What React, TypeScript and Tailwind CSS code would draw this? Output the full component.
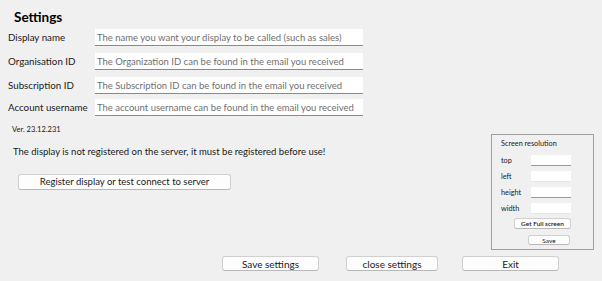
import React from 'react';

const font = { fontFamily: 'Lato, "Open Sans", sans-serif' };

const fields = [
    { label: 'Display name', placeholder: 'The name you want your display to be called (such as sales)', gap: 'mt-0' },
    { label: 'Organisation ID', placeholder: 'The Organization ID can be found in the email you received', gap: 'mt-[7px]' },
    { label: 'Subscription ID', placeholder: 'The Subscription ID can be found in the email you received', gap: 'mt-[7px]' },
    { label: 'Account username', placeholder: 'The account username can be found in the email you received', gap: 'mt-[5px]' },
];

const resFields = [
    { label: 'top', gap: 'mt-[6px]', line: 'border-[#9a9a9a]' },
    { label: 'left', gap: 'mt-[5px]', line: 'border-[#e6e6e6]' },
    { label: 'height', gap: 'mt-[5px]', line: 'border-[#9a9a9a]' },
    { label: 'width', gap: 'mt-[5px]', line: 'border-[#e6e6e6]' },
];

const WinButton: React.FC<{ label: string; className: string }> = ({ label, className }) => (
    <button
        className={`flex items-center justify-center bg-[#fdfdfd] border border-[#d0d0d0] border-b-[#b8b8b8] rounded-[3px] text-[#1a1a1a] ${className}`}
    >
        {label}
    </button>
);

export default function App() {
    return (
        <div className="w-[602px] h-[281px] bg-[#f0f0f0] text-[#1a1a1a] overflow-hidden" style={font}>
            <div className="pl-[14px] pt-[8px] h-[29px] text-[13.5px] font-bold leading-[18px] text-black">Settings</div>

            <div className="flex flex-col pl-[8px]">
                {fields.map((f) => (
                    <div key={f.label} className={`flex items-center h-[17px] ${f.gap}`}>
                        <div className="w-[87px] text-[9.75px] leading-[17px] whitespace-nowrap">{f.label}</div>
                        <input
                            readOnly
                            placeholder={f.placeholder}
                            className="w-[268px] h-[17px] bg-white border-b border-[#8a8a8a] px-[2px] text-[9.5px] leading-[16px] placeholder:text-[#707070] outline-none"
                            style={font}
                        />
                    </div>
                ))}
            </div>

            <div className="flex mt-[6px]">
                <div className="flex flex-col">
                    <div className="pl-[12px] text-[7.5px] leading-[12px] mt-[2px]">Ver. 23.12.231</div>
                    <div className="pl-[13px] text-[9.5px] leading-[14px] mt-[9px] whitespace-nowrap">
                        The display is not registered on the server, it must be registered before use!
                    </div>
                    <WinButton
                        label="Register display or test connect to server"
                        className="ml-[18px] mt-[15px] w-[213px] h-[16px] text-[9.5px] leading-[14px]"
                    />
                </div>

                <div className="ml-auto mr-[8px] mt-[12px] w-[103px] h-[116px] border border-[#a0a0a0] flex flex-col pl-[9px]">
                    <div className="text-[7.3px] leading-[10px] mt-[4px]">Screen resolution</div>
                    {resFields.map((r) => (
                        <div key={r.label} className={`flex items-center h-[11px] ${r.gap}`}>
                            <div className="w-[30px] text-[7.3px] leading-[10px]">{r.label}</div>
                            <div className={`w-[40px] h-[11px] bg-white border-b ${r.line}`} />
                        </div>
                    ))}
                    <WinButton label="Get Full screen" className="ml-[13px] mt-[4px] w-[57px] h-[11px] text-[6.5px] leading-[9px] font-semibold" />
                    <WinButton label="Save" className="ml-[27px] mt-[6px] w-[42px] h-[10px] text-[6.5px] leading-[9px]" />
                </div>
            </div>

            <div className="flex mt-[6px] pl-[222px]">
                <WinButton label="Save settings" className="w-[97px] h-[15px] text-[10px] leading-[14px]" />
                <WinButton label="close settings" className="ml-[27px] w-[92px] h-[15px] text-[10px] leading-[14px]" />
                <WinButton label="Exit" className="ml-[24px] w-[97px] h-[15px] text-[10px] leading-[14px]" />
            </div>
        </div>
    );
}
